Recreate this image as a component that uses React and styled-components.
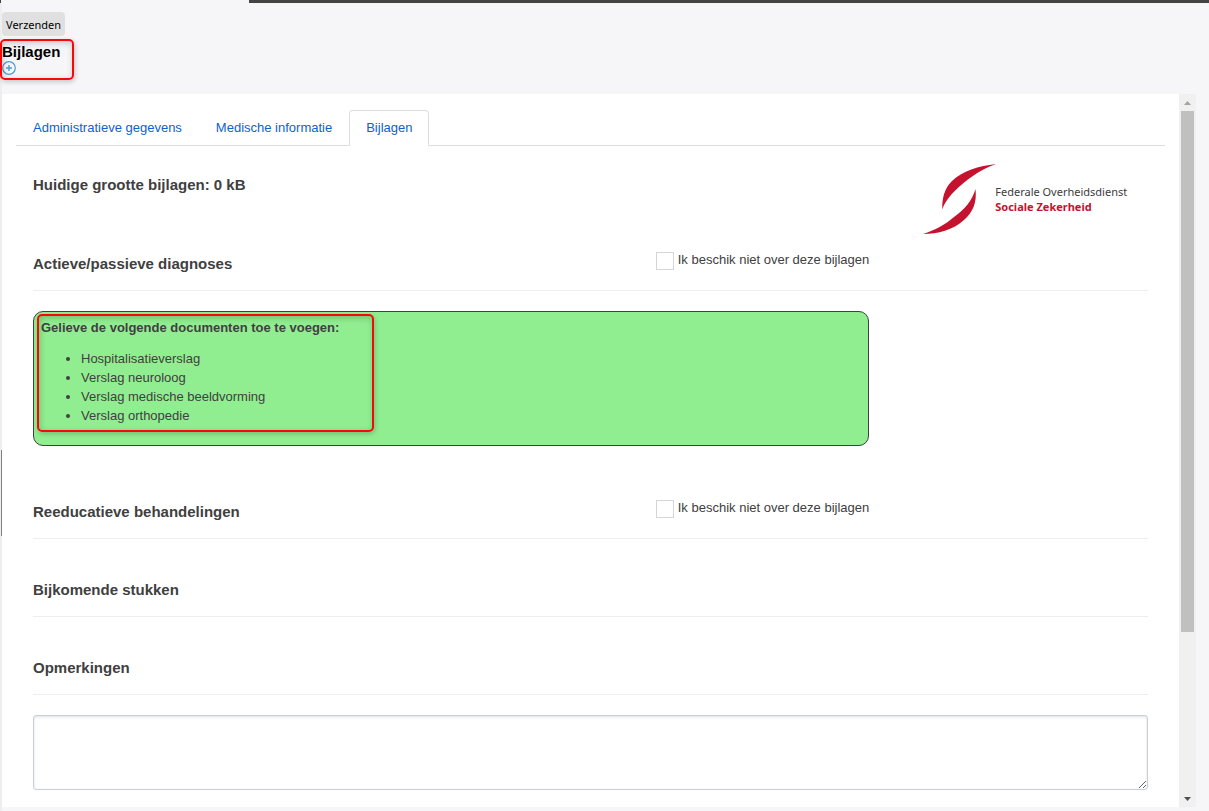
import React, { useState } from 'react';
import styled, { createGlobalStyle, css } from 'styled-components';

const GlobalStyle = createGlobalStyle`
  *, *::before, *::after {
    box-sizing: border-box;
  }

  body {
    margin: 0;
    background: #f6f6f9;
    color: #404040;
    font-family: 'Liberation Sans', Arial, sans-serif;
    font-size: 13px;
    line-height: 19px;
  }
`;

// Styled components
const Page = styled.div`
  display: flex;
  flex-direction: column;
  height: 100vh;
  overflow: hidden;
`;

const TopBar = styled.div`
  flex: none;
  height: 3px;
  background: linear-gradient(to right, #434343 1px, #f6f6f9 1px 249px, #434343 249px);
`;

const Body = styled.div`
  display: flex;
  flex: 1;
  min-height: 0;
`;

const Splitter = styled.div`
  display: grid;
  grid-template-rows: 13fr 86px 8fr;
  flex: none;
  width: 2px;
  background: #eeeeee;
`;

const SplitterHandle = styled.div`
  grid-row: 2;
  border-right: 1px solid #808080;
`;

const Main = styled.main`
  display: flex;
  flex: 1;
  flex-direction: column;
  min-width: 0;
  padding: 9px 13px 4px 0;
`;

const Header = styled.header`
  flex: none;
  height: 82px;
`;

const SendButton = styled.button`
  display: block;
  height: 24px;
  padding: 0 4px;
  border: none;
  border-radius: 4px;
  background: #e0e0e0;
  color: #000;
  font-family: 'Noto Sans', 'Open Sans', sans-serif;
  font-size: 11px;
  cursor: pointer;
`;

// Red frame drawn over the part of the page that needs attention
const highlight = css`
  position: relative;

  &::after {
    content: '';
    position: absolute;
    border: 2px solid #f80808;
    border-radius: 5px;
    box-shadow: 1px 2px 5px rgba(0, 0, 0, 0.2), inset 1px 2px 6px rgba(0, 0, 0, 0.2);
    pointer-events: none;
  }
`;

const AttachmentTools = styled.div`
  ${highlight}
  width: 72px;
  margin-top: 6px;

  &::after {
    inset: -3px 0 -5px -2px;
  }
`;

const ToolsTitle = styled.h1`
  margin: 0;
  color: #000;
  font-size: 15px;
  line-height: 19px;
`;

const AddButton = styled.button`
  display: block;
  width: 14px;
  height: 14px;
  padding: 0;
  border: none;
  background: none;
  cursor: pointer;

  svg {
    display: block;
  }
`;

const Viewer = styled.div`
  display: flex;
  flex: 1;
  min-height: 0;
`;

const Document = styled.div`
  flex: 1;
  min-width: 0;
  padding: 16px 14px;
  overflow: hidden;
  background: #fff;
`;

const Tabs = styled.nav`
  display: flex;
  border-bottom: 1px solid #dddddd;
`;

const Tab = styled.a`
  margin-bottom: -1px;
  padding: 8px 16px;
  border: 1px solid ${props => (props.$active ? '#dddddd' : 'transparent')};
  border-bottom-color: ${props => (props.$active ? '#fff' : 'transparent')};
  border-radius: 4px 4px 0 0;
  color: #0d61d0;
  line-height: 18px;
  text-decoration: none;
`;

const Form = styled.form`
  padding: 0 17px;
`;

const Intro = styled.div`
  display: grid;
  grid-template-columns: 3fr 1fr;
  align-items: start;
  margin-bottom: 15px;
  padding-top: 17px;
`;

const Heading = styled.h2`
  margin: 0;
  font-size: 15px;
  line-height: 20px;
`;

const Size = styled(Heading)`
  padding-top: 12px;
`;

const Logo = styled.div`
  display: flex;
  align-items: center;
  padding-left: 54px;

  svg {
    flex: none;
    margin-right: -2px;
  }
`;

const LogoText = styled.div`
  color: #3c3c3c;
  font-family: 'Noto Sans', sans-serif;
  font-size: 11px;
  line-height: 15px;
  white-space: nowrap;

  strong {
    display: block;
    color: #c4122f;
  }
`;

const Section = styled.section`
  display: flow-root;
  margin-bottom: 17px;
`;

const SectionHead = styled.div`
  display: flex;
  align-items: flex-start;
  justify-content: space-between;
  height: 41px;
  margin-bottom: 20px;
  padding-right: 25%;
  border-bottom: 1px solid #eeeeee;

  ${Heading} {
    padding-top: 4px;
  }
`;

const CheckLabel = styled.label`
  display: flex;
  gap: 4px;
  line-height: 20px;
`;

const CheckBox = styled.input`
  appearance: none;
  width: 18px;
  height: 18px;
  margin: 2px 0 0;
  border: 1px solid #d5d5d5;
  background: #fff;

  &:checked {
    background: #0d61d0;
    box-shadow: inset 0 0 0 3px #fff;
  }
`;

const Notice = styled.div`
  width: 75%;
  margin-bottom: 35px;
  padding: 6px 7px 20px;
  border: 1px solid #404040;
  border-radius: 10px;
  background: #90ee90;
`;

const Requested = styled.div`
  ${highlight}
  width: 330px;

  &::after {
    inset: -4px -3px -7px -4px;
  }
`;

const NoticeTitle = styled.strong`
  display: block;
`;

const DocumentList = styled.ul`
  margin: 12px 0 0;
  padding-left: 40px;
`;

const Remarks = styled.textarea`
  display: block;
  width: 100%;
  height: 75px;
  padding: 6px 12px;
  border: 1px solid #c8d0d6;
  border-radius: 3px;
  box-shadow: inset 0 1px 3px rgba(0, 0, 0, 0.12);
  color: inherit;
  font: inherit;
  resize: vertical;
`;

const ScrollBar = styled.div`
  display: flex;
  flex: none;
  flex-direction: column;
  width: 17px;
  background: #f0f0f0;
`;

const ScrollButton = styled.button`
  display: flex;
  flex: none;
  align-items: center;
  justify-content: center;
  width: 17px;
  height: 17px;
  padding: 0;
  border: none;
  background: none;
  color: ${props => props.$color};
`;

const ScrollTrack = styled.div`
  flex: 1;
  padding: 0 2px 2px;
`;

const ScrollThumb = styled.div`
  width: 100%;
  height: 77%;
  background: #c0c0c0;
`;

const tabs = ['Administratieve gegevens', 'Medische informatie', 'Bijlagen'];

const sections = [
  {
    id: 'diagnoses',
    title: 'Actieve/passieve diagnoses',
    optional: true,
    documents: [
      'Hospitalisatieverslag',
      'Verslag neuroloog',
      'Verslag medische beeldvorming',
      'Verslag orthopedie',
    ],
  },
  { id: 'behandelingen', title: 'Reeducatieve behandelingen', optional: true },
  { id: 'stukken', title: 'Bijkomende stukken' },
];

const PlusIcon = () => (
  <svg width="14" height="14" viewBox="0 0 14 14" fill="none" stroke="#4a9ccc">
    <circle cx="7" cy="7" r="6.3" strokeWidth="1.2" />
    <path d="M7 4v6M4 7h6" strokeWidth="1.4" />
  </svg>
);

const LogoMark = () => (
  <svg width="74" height="72" viewBox="0 0 74 72" fill="#c4122f">
    <path d="M73 1C56 3 39 8 29 18C21 26 19 36 19.300 46.500C22 38 29 30 37 23C47 14 59 6 73 1Z" />
    <path d="M52.500 26C54 40 50 49 41 57C30 67 15 71 0 71C12 67 22 62 31 54C42 46 49 38 52.500 26Z" />
  </svg>
);

const App = () => {
  const [activeTab, setActiveTab] = useState('Bijlagen');
  const [missing, setMissing] = useState({});

  const handleTab = (event, tab) => {
    event.preventDefault();
    setActiveTab(tab);
  };

  const toggleMissing = id => {
    setMissing({ ...missing, [id]: !missing[id] });
  };

  return (
    <Page>
      <GlobalStyle />
      <TopBar />
      <Body>
        <Splitter>
          <SplitterHandle />
        </Splitter>
        <Main>
          <Header>
            <SendButton type="button">Verzenden</SendButton>
            <AttachmentTools>
              <ToolsTitle>Bijlagen</ToolsTitle>
              <AddButton type="button" aria-label="Bijlage toevoegen">
                <PlusIcon />
              </AddButton>
            </AttachmentTools>
          </Header>

          <Viewer>
            <Document>
              <Tabs>
                {tabs.map(tab => (
                  <Tab
                    key={tab}
                    href="#"
                    $active={tab === activeTab}
                    onClick={event => handleTab(event, tab)}
                  >
                    {tab}
                  </Tab>
                ))}
              </Tabs>

              <Form>
                <Intro>
                  <Size>Huidige grootte bijlagen: 0 kB</Size>
                  <Logo>
                    <LogoMark />
                    <LogoText>
                      Federale Overheidsdienst
                      <strong>Sociale Zekerheid</strong>
                    </LogoText>
                  </Logo>
                </Intro>

                {sections.map(section => (
                  <Section key={section.id}>
                    <SectionHead>
                      <Heading>{section.title}</Heading>
                      {section.optional && (
                        <CheckLabel>
                          <CheckBox
                            type="checkbox"
                            checked={!!missing[section.id]}
                            onChange={() => toggleMissing(section.id)}
                          />
                          Ik beschik niet over deze bijlagen
                        </CheckLabel>
                      )}
                    </SectionHead>
                    {section.documents && (
                      <Notice>
                        <Requested>
                          <NoticeTitle>Gelieve de volgende documenten toe te voegen:</NoticeTitle>
                          <DocumentList>
                            {section.documents.map(name => (
                              <li key={name}>{name}</li>
                            ))}
                          </DocumentList>
                        </Requested>
                      </Notice>
                    )}
                  </Section>
                ))}

                <Section>
                  <SectionHead>
                    <Heading id="remarks-title">Opmerkingen</Heading>
                  </SectionHead>
                  <Remarks aria-labelledby="remarks-title" />
                </Section>
              </Form>
            </Document>

            <ScrollBar>
              <ScrollButton type="button" aria-label="Omhoog" $color="#a3a3a3">
                <svg width="7" height="4" viewBox="0 0 7 4" fill="currentColor">
                  <path d="M0 4L3.500 0L7 4Z" />
                </svg>
              </ScrollButton>
              <ScrollTrack>
                <ScrollThumb />
              </ScrollTrack>
              <ScrollButton type="button" aria-label="Omlaag" $color="#505050">
                <svg width="7" height="4" viewBox="0 0 7 4" fill="currentColor">
                  <path d="M0 0L3.500 4L7 0Z" />
                </svg>
              </ScrollButton>
            </ScrollBar>
          </Viewer>
        </Main>
      </Body>
    </Page>
  );
};

export default App;
